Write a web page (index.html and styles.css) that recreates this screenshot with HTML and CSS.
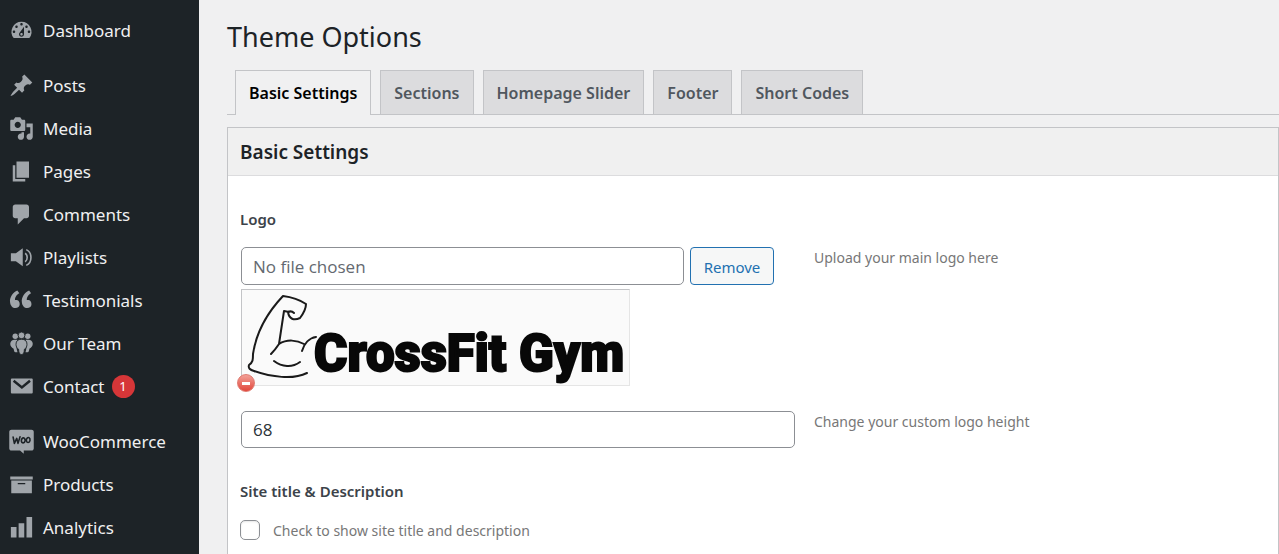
FILE: index.html
```
<!DOCTYPE html>
<html lang="en">
<head>
<meta charset="utf-8">
<title>Theme Options</title>
<link rel="stylesheet" href="styles.css">
</head>
<body>
<div class="layout">
  <nav class="sidebar" aria-label="Main menu">
    <ul class="menu">
      <li><a class="menu-link" href="#"><svg class="icon" viewBox="0 0 20 20"><path fill-rule="evenodd" d="M3.76 16h12.48A7.998 7.998 0 0 0 10 3a7.998 7.998 0 0 0-6.24 13zM10 4c.55 0 1 .45 1 1s-.45 1-1 1-1-.45-1-1 .45-1 1-1zM6 6c.55 0 1 .45 1 1s-.45 1-1 1-1-.45-1-1 .45-1 1-1zm8 0c.55 0 1 .45 1 1s-.45 1-1 1-1-.45-1-1 .45-1 1-1zm-5.37 5.55L12 7v6c0 1.1-.9 2-2 2s-2-.9-2-2c0-.57.24-1.08.63-1.45zM4 10c.55 0 1 .45 1 1s-.45 1-1 1-1-.45-1-1 .45-1 1-1zm12 0c.55 0 1 .45 1 1s-.45 1-1 1-1-.45-1-1 .45-1 1-1zm-5 3c0-.55-.45-1-1-1s-1 .45-1 1 .45 1 1 1 1-.45 1-1z"/></svg>Dashboard</a></li>
    </ul>
    <ul class="menu">
      <li><a class="menu-link" href="#"><svg class="icon" viewBox="0 0 20 20"><path d="M10.44 3.02l1.82-1.82 6.36 6.35-1.83 1.82c-1.05-.68-2.48-.57-3.41.36l-.75.75c-.92.93-1.04 2.35-.35 3.41l-1.83 1.82-2.41-2.41-2.8 2.79c-.42.42-3.38 2.71-3.8 2.29s1.86-3.39 2.28-3.81l2.79-2.79L4.1 9.36l1.83-1.82c1.05.69 2.48.57 3.4-.36l.75-.75c.93-.92 1.05-2.35.36-3.41z"/></svg>Posts</a></li>
      <li><a class="menu-link" href="#"><svg class="icon" viewBox="0 0 20 20"><path fill-rule="evenodd" d="M13 11V4c0-.55-.45-1-1-1h-1.67L9 1H5L3.67 3H2c-.55 0-1 .45-1 1v7c0 .55.45 1 1 1h10c.55 0 1-.45 1-1zM7 4.5c1.38 0 2.5 1.12 2.5 2.5S8.38 9.5 7 9.5 4.5 8.38 4.500 7 5.620 4.500 7 4.500zM14 6h5v10.5c0 1.38-1.12 2.5-2.5 2.5S14 17.88 14 16.5s1.12-2.5 2.5-2.5c.17 0 .34.02.5.05V9h-3V6zm-4 8.05V13h2v3.5c0 1.38-1.12 2.5-2.5 2.5S7 17.88 7 16.5 8.12 14 9.5 14c.17 0 .34.02.5.05z"/></svg>Media</a></li>
      <li><a class="menu-link" href="#"><svg class="icon" viewBox="0 0 20 20"><path d="M6 15V2h10v13H6zm-1 1h8v2H3V5h2v11z"/></svg>Pages</a></li>
      <li><a class="menu-link" href="#"><svg class="icon" viewBox="0 0 20 20"><path d="M5 2h9c1.1 0 2 .9 2 2v7c0 1.1-.9 2-2 2h-2l-5 5v-5H5c-1.1 0-2-.9-2-2V4c0-1.1.9-2 2-2z"/></svg>Comments</a></li>
      <li><a class="menu-link" href="#"><svg class="icon" viewBox="0 0 20 20"><path d="M1.500 6.500h4l5.500-4v14.500l-5.500-4h-4z"/><path class="icon-line" d="M12.900 6.600c2.200 1.500 2.200 5.300 0 6.800M13.800 3.700c5 2.200 5 10.400 0 12.600"/></svg>Playlists</a></li>
      <li><a class="menu-link" href="#"><svg class="icon" viewBox="0 0 20 20"><path d="M8.54 12.74c0-.87-.24-1.61-.72-2.22-.73-.92-2.14-1.03-2.96-.85-.34-1.93 1.3-4.39 3.42-5.45L6.65 1.94C3.45 3.46.31 6.96.85 11.37 1.19 14.16 2.8 16 5.08 16c1 0 1.83-.29 2.48-.88.66-.59.98-1.38.98-2.38zm9.43 0c0-.87-.24-1.61-.72-2.22-.73-.92-2.14-1.03-2.96-.85-.34-1.93 1.3-4.39 3.42-5.45l-1.63-2.28c-3.2 1.52-6.34 5.02-5.8 9.43.34 2.79 1.95 4.63 4.23 4.63 1 0 1.83-.29 2.48-.88.66-.59.98-1.38.98-2.38z"/></svg>Testimonials</a></li>
      <li><a class="menu-link" href="#"><svg class="icon" viewBox="0 0 20 20"><circle cx="5" cy="4.200" r="2.200"/><circle cx="15" cy="4.200" r="2.200"/><path d="M4.500 6.900h2.200C5.600 9 5.500 12.500 6.800 17H5.200c-1.200 0-1.200-1.500-1.500-2.800C2 13.400.9 11.800 1 10c.2-1.900 1.500-3.100 3.500-3.100zM15.500 6.900h-2.200c1.100 2.100 1.200 5.600-.1 10.100h1.600c1.200 0 1.200-1.500 1.500-2.800 1.700-.8 2.800-2.400 2.700-4.200-.2-1.900-1.500-3.100-3.500-3.100z"/><circle class="icon-cut" cx="10" cy="3.500" r="2.700"/><path class="icon-cut" d="M10 6.600c2.900 0 4.400 1.500 4.400 4 0 1.900-.8 3.300-2.100 4-.1 2.700-.6 4.200-2.300 4.200s-2.200-1.500-2.300-4.200c-1.300-.7-2.100-2.100-2.100-4C5.600 8.100 7.100 6.600 10 6.600z"/></svg>Our Team</a></li>
      <li><a class="menu-link" href="#"><svg class="icon" viewBox="0 0 20 20"><path d="M2.500 3.500h15.500c.6 0 1 .4 1 1v10c0 .6-.4 1-1 1h-15.500c-.6 0-1-.4-1-1V4.500c0-.6.4-1 1-1z"/><path class="icon-fold" d="M3.700 5.400l6.600 5.300 6.500-5.300"/></svg>Contact<span class="badge">1</span></a></li>
    </ul>
    <ul class="menu">
      <li><a class="menu-link" href="#"><svg class="icon" viewBox="0 0 20 20"><path d="M2 .5h16c1 0 1.800.7 1.800 1.700v13.300c0 1-.8 1.700-1.800 1.700h-6.200v2.600L8.800 17.200H2c-1 0-1.800-.7-1.800-1.700V2.200C.2 1.200 1 .5 2 .5z"/><path class="icon-woo" d="M3.300 6.500l1 5 1.900-4 1 4 1.600-5.200M12 7.200c-1.200-.5-2.300 1-2.100 2.500.2 2 2.600 1.800 2.900-.2.100-1-.1-2-.8-2.300zM16 6.900c-1.200-.5-2.300 1-2.100 2.500.2 2 2.600 1.800 2.900-.2.100-1-.1-2-.8-2.300z"/></svg>WooCommerce</a></li>
      <li><a class="menu-link" href="#"><svg class="icon" viewBox="0 0 20 20"><path fill-rule="evenodd" d="M19 3.500v2.500H1V3.500h18zM1.800 6.800h16.500V17H1.800V6.800zM13 9.800V8.800H7v1h6z"/></svg>Products</a></li>
      <li><a class="menu-link" href="#"><svg class="icon" viewBox="0 0 20 20"><path d="M18.500 18V1.500H14V18h4.500zm-6.300 0V6.500H7.700V18h4.500zM6 18v-8.500H1.500V18H6z"/></svg>Analytics</a></li>
    </ul>
  </nav>

  <main class="content">
    <h1 class="page-title">Theme Options</h1>
    <div class="tabs">
      <a class="tab tab-active" href="#">Basic Settings</a>
      <a class="tab" href="#">Sections</a>
      <a class="tab" href="#">Homepage Slider</a>
      <a class="tab" href="#">Footer</a>
      <a class="tab" href="#">Short Codes</a>
    </div>

    <section class="panel">
      <h2 class="panel-title">Basic Settings</h2>
      <form class="panel-body">
        <label class="field-title" for="logo">Logo</label>
        <div class="field-row">
          <div class="field">
            <div class="upload">
              <input class="text-input" id="logo" type="text" placeholder="No file chosen">
              <button class="button" type="button">Remove</button>
            </div>
            <div class="preview">
              <svg class="logo" viewBox="0 0 387 95" role="img" aria-label="CrossFit Gym">
                <path class="arm" d="M74 47c-7 1-12 7-14 14M65 83c-14 7-36 4-53-2-4-1-6-3-5-6 4-3 4-5 4-11C14 44 24 24 41 6c8 1 17 4 23 8 0 5-3 10-6 14-6 3-11 1-12-6 2-1 4-1 6 1M47 22l-5-1-5 33M29 64c3-3 6-7 8-10 8-5 18-4 25 0M32 71c8 6 18 7 26 1"/>
                <text class="logo-text" x="72" y="81">CrossFit Gym</text>
              </svg>
              <button class="delete" type="button" aria-label="Delete logo"></button>
            </div>
          </div>
          <p class="hint">Upload your main logo here</p>
        </div>
        <div class="field-row">
          <div class="field">
            <input class="text-input text-input-short" type="text" value="68" aria-label="Logo height">
          </div>
          <p class="hint">Change your custom logo height</p>
        </div>
        <h3 class="field-title field-title-next">Site title &amp; Description</h3>
        <label class="check"><input class="check-box" type="checkbox">Check to show site title and description</label>
      </form>
    </section>
  </main>
</div>
</body>
</html>
```
FILE: styles.css
```
* { box-sizing: border-box; }
body {
  margin: 0;
  background: #f0f0f1;
  color: #3c434a;
  font-family: "Noto Sans", "Open Sans", sans-serif;
  font-size: 14px;
  overflow: hidden;
}
.layout { display: flex; min-height: 100vh; }

.sidebar {
  flex: 0 0 199px;
  display: flex;
  flex-direction: column;
  gap: 12px;
  padding-top: 9px;
  background: #1d2327;
}
.menu { margin: 0; padding: 0; list-style: none; }
.menu-link {
  display: flex;
  align-items: center;
  height: 43px;
  padding-left: 9px;
  color: #f0f0f1;
  font-size: 17px;
  text-decoration: none;
}
.icon { width: 25px; height: 25px; margin-right: 9px; fill: #a0a5aa; }
.icon-line { fill: none; stroke: #a0a5aa; stroke-width: 1.3; }
.icon-cut { stroke: #1d2327; stroke-width: 0.7; }
.icon-fold { fill: none; stroke: #1d2327; stroke-width: 2; }
.icon-woo { fill: none; stroke: #1d2327; stroke-width: 1.3; stroke-linejoin: round; stroke-linecap: round; }
.badge {
  width: 23px;
  margin-left: 7px;
  border-radius: 12px;
  background: #d63638;
  color: #fff;
  font-size: 13px;
  line-height: 23px;
  text-align: center;
}

.content { flex: 1; min-width: 0; padding: 16px 0 0 28px; }
.page-title {
  margin: 0 0 12px;
  color: #1d2327;
  font-size: 27px;
  font-weight: 400;
  line-height: 42px;
}
.tabs {
  display: flex;
  gap: 9px;
  padding-left: 8px;
  border-bottom: 1px solid #c3c4c7;
}
.tab {
  padding: 2px 13px 0;
  border: 1px solid #c3c4c7;
  border-bottom: 0;
  background: #dcdcde;
  color: #50575e;
  font-size: 16px;
  font-weight: 600;
  line-height: 41px;
  text-decoration: none;
  white-space: nowrap;
}
.tab-active { margin-bottom: -1px; background: #f0f0f1; color: #000; }

.panel { margin-top: 12px; border: 1px solid #c3c4c7; background: #fff; }
.panel-title {
  margin: 0;
  padding: 2px 12px 0;
  border-bottom: 1px solid #dcdcde;
  background: #f0f0f0;
  color: #1d2327;
  font-size: 19px;
  font-weight: 600;
  line-height: 45px;
}
.panel-body { padding: 32px 12px; }
.field-title {
  display: block;
  margin: 0 0 17px;
  font-size: 15px;
  font-weight: 600;
  line-height: 22px;
}
.field-title-next { margin: 32px 0 18px; }
.field-row { display: flex; align-items: flex-start; gap: 19px; margin-left: 1px; }
.field-row + .field-row { margin-top: 25px; }
.field { flex: 0 1 554px; }
.upload { display: flex; gap: 6px; width: 533px; max-width: 100%; }
.text-input {
  display: block;
  flex: 1;
  width: 100%;
  min-width: 0;
  height: 38px;
  padding: 0 11px;
  border: 1px solid #8c8f94;
  border-radius: 5px;
  background: #fff;
  color: #2c3338;
  font: 17px "Open Sans", "Noto Sans", sans-serif;
}
.text-input-short { height: 37px; }
.text-input::placeholder { color: #646970; opacity: 1; }
.button {
  width: 84px;
  padding: 2px 0 0;
  border: 1px solid #2271b1;
  border-radius: 4px;
  background: #f6f7f7;
  color: #2271b1;
  font: 15px "Noto Sans", "Open Sans", sans-serif;
}
.preview {
  position: relative;
  width: 389px;
  margin-top: 4px;
  border: 1px solid #e5e5e5;
  border-top-color: #c3c4c7;
  border-left-color: #c3c4c7;
  background: #fafafa;
}
.logo { display: block; width: 100%; }
.arm { fill: none; stroke: #1a1a1a; stroke-width: 2; stroke-linecap: round; stroke-linejoin: round; }
.logo-text {
  fill: #080808;
  stroke: #080808;
  stroke-width: 2;
  font-family: Roboto, sans-serif;
  font-size: 51px;
  font-weight: 900;
}
.delete {
  position: absolute;
  left: -5px;
  bottom: -7px;
  width: 18px;
  height: 18px;
  padding: 0;
  border: 1px solid #e07a70;
  border-radius: 50%;
  background: linear-gradient(#fff, #fff) center / 8px 3px no-repeat, linear-gradient(#f2a097, #e2463b);
}
.hint { margin: 0; color: #777; line-height: 21px; }
.check { display: flex; align-items: center; gap: 13px; color: #777; }
.check-box {
  appearance: none;
  width: 20px;
  height: 20px;
  margin: 0;
  border: 1px solid #8c8f94;
  border-radius: 5px;
  background: #fff;
  box-shadow: inset 0 1px 2px rgba(0, 0, 0, 0.1);
}
```
